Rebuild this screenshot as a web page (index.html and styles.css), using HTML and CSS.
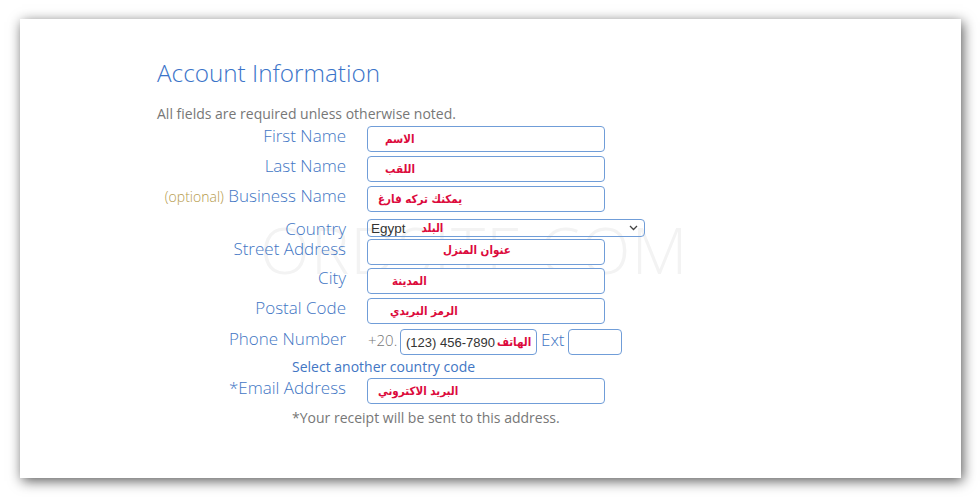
FILE: index.html
```html
<!DOCTYPE html>
<html lang="en">
<head>
<meta charset="utf-8">
<title>Account Information</title>
<link rel="stylesheet" href="styles.css">
</head>
<body>
<div class="card">
  <div class="watermark">ORDSITE.COM</div>
  <h1 class="title">Account Information</h1>
  <p class="note">All fields are required unless otherwise noted.</p>
  <div class="form">
    <div class="row">
      <label class="lbl">First Name</label>
      <div class="box"><span class="ar off-18">الاسم</span></div>
    </div>
    <div class="row">
      <label class="lbl">Last Name</label>
      <div class="box"><span class="ar off-18">اللقب</span></div>
    </div>
    <div class="row row-business">
      <label class="lbl"><span class="optional">(optional)</span> Business Name</label>
      <div class="box"><span class="ar off-10">يمكنك تركه فارغ</span></div>
    </div>
    <div class="row row-country">
      <label class="lbl lbl-tight">Country</label>
      <div class="select">
        <span class="sel-val">Egypt</span><span class="ar sel-ar">البلد</span>
        <svg class="chev" width="9" height="6" viewBox="0 0 9 6"><path d="M1 1l3.5 3.5L8 1" fill="none" stroke="#444" stroke-width="1.3"/></svg>
      </div>
    </div>
    <div class="row row-street">
      <label class="lbl">Street Address</label>
      <div class="box box-top"><span class="ar off-76">عنوان المنزل</span></div>
    </div>
    <div class="row">
      <label class="lbl">City</label>
      <div class="box"><span class="ar off-25">المدينة</span></div>
    </div>
    <div class="row row-postal">
      <label class="lbl">Postal Code</label>
      <div class="box"><span class="ar off-23">الرمز البريدي</span></div>
    </div>
    <div class="row row-phone">
      <label class="lbl">Phone Number</label>
      <div class="phone">
        <span class="cc">+20.</span>
        <div class="box box-phone"><span class="num">(123) 456-7890</span><span class="ar ar-phone">الهاتف</span></div>
        <span class="ext">Ext</span>
        <div class="box box-ext"></div>
      </div>
    </div>
    <p class="sub sub-blue">Select another country code</p>
    <div class="row">
      <label class="lbl">*Email Address</label>
      <div class="box"><span class="ar off-10">البريد الاكتروني</span></div>
    </div>
    <p class="sub sub-gray">*Your receipt will be sent to this address.</p>
  </div>
</div>
</body>
</html>
```
FILE: styles.css
```css
html, body {
  margin: 0;
  padding: 0;
  background: #ffffff;
}
body {
  padding: 19px 19px 19px 20px;
  font-family: "Open Sans", "Liberation Sans", sans-serif;
}
.card {
  position: relative;
  width: 941px;
  height: 459px;
  box-sizing: border-box;
  background: #ffffff;
  box-shadow: 2px 3px 12px rgba(0, 0, 0, 0.65);
  padding: 37px 0 0 137px;
  overflow: hidden;
}
.watermark {
  position: absolute;
  left: 240px;
  top: 186px;
  font-family: "Open Sans", sans-serif;
  font-size: 65px;
  font-weight: 300;
  letter-spacing: 1px;
  color: #f3f3f3;
  z-index: 0;
  white-space: nowrap;
}
.title, .note, .form { position: relative; z-index: 1; }
.title {
  margin: 0;
  font-size: 24.3px;
  font-weight: 300;
  line-height: 34px;
  color: #3b74c9;
}
.note {
  margin: 15px 0 0 0;
  font-size: 14px;
  line-height: 18px;
  color: #777777;
}
.form {
  margin-top: 3px;
}
.row {
  display: grid;
  grid-template-columns: 189px auto;
  column-gap: 21px;
  align-items: start;
  height: 30px;
}
.lbl {
  text-align: right;
  font-size: 17px;
  font-weight: 300;
  line-height: 20px;
  color: #4276c4;
  white-space: nowrap;
}
.lbl-tight { line-height: 18px; margin-top: 1px; }
.optional {
  font-size: 14px;
  color: #b59a4a;
}
.row-business { height: 33px; }
.row-country { height: 20px; }
.row-street { height: 29px; }
.row-postal { height: 31px; }
.row-phone { height: 26px; }
.box {
  box-sizing: border-box;
  width: 238px;
  height: 26px;
  border: 1px solid #709dd8;
  border-radius: 4px;
  background: #ffffff;
  display: flex;
  align-items: center;
  white-space: nowrap;
  overflow: hidden;
}
.box-top { align-items: flex-start; padding-top: 3px; }
.ar {
  font-family: "DejaVu Sans Condensed", "DejaVu Sans", sans-serif;
  font-weight: 700;
  font-size: 11.5px;
  color: #dc0a3c;
  direction: rtl;
  unicode-bidi: isolate;
  line-height: 14px;
  white-space: nowrap;
}
.off-10 { margin-left: 10px; }
.off-18 { margin-left: 17px; }
.off-23 { margin-left: 22px; }
.off-25 { margin-left: 24px; }
.off-76 { margin-left: 75px; }
.select {
  position: relative;
  box-sizing: border-box;
  width: 278px;
  height: 18px;
  border: 1px solid #709dd8;
  border-radius: 4px;
  display: flex;
  align-items: center;
  padding-left: 3px;
}
.sel-val {
  font-family: "Liberation Sans", sans-serif;
  font-size: 13.5px;
  color: #333333;
}
.sel-ar { margin-left: 16px; }
.chev {
  position: absolute;
  right: 6px;
  top: 5px;
}
.phone {
  display: flex;
  align-items: flex-start;
}
.cc {
  font-size: 15px;
  font-weight: 300;
  line-height: 22px;
  color: #777777;
  margin-left: 1px;
  width: 32px;
}
.box-phone {
  width: 137px;
  padding-left: 5px;
}
.num {
  font-family: "Liberation Sans", sans-serif;
  font-size: 13px;
  color: #333333;
}
.ar-phone { margin-left: 2px; }
.ext {
  font-size: 17px;
  font-weight: 300;
  line-height: 22px;
  color: #4276c4;
  margin-left: 4px;
  width: 27px;
}
.box-ext {
  width: 54px;
}
.sub {
  margin: 0;
  padding-left: 135px;
  font-size: 14px;
  line-height: 20px;
  height: 23px;
}
.sub-blue { color: #4276c4; margin-top: 2px; height: 21px; }
.sub-gray { color: #777777; margin-top: 0; }
```
